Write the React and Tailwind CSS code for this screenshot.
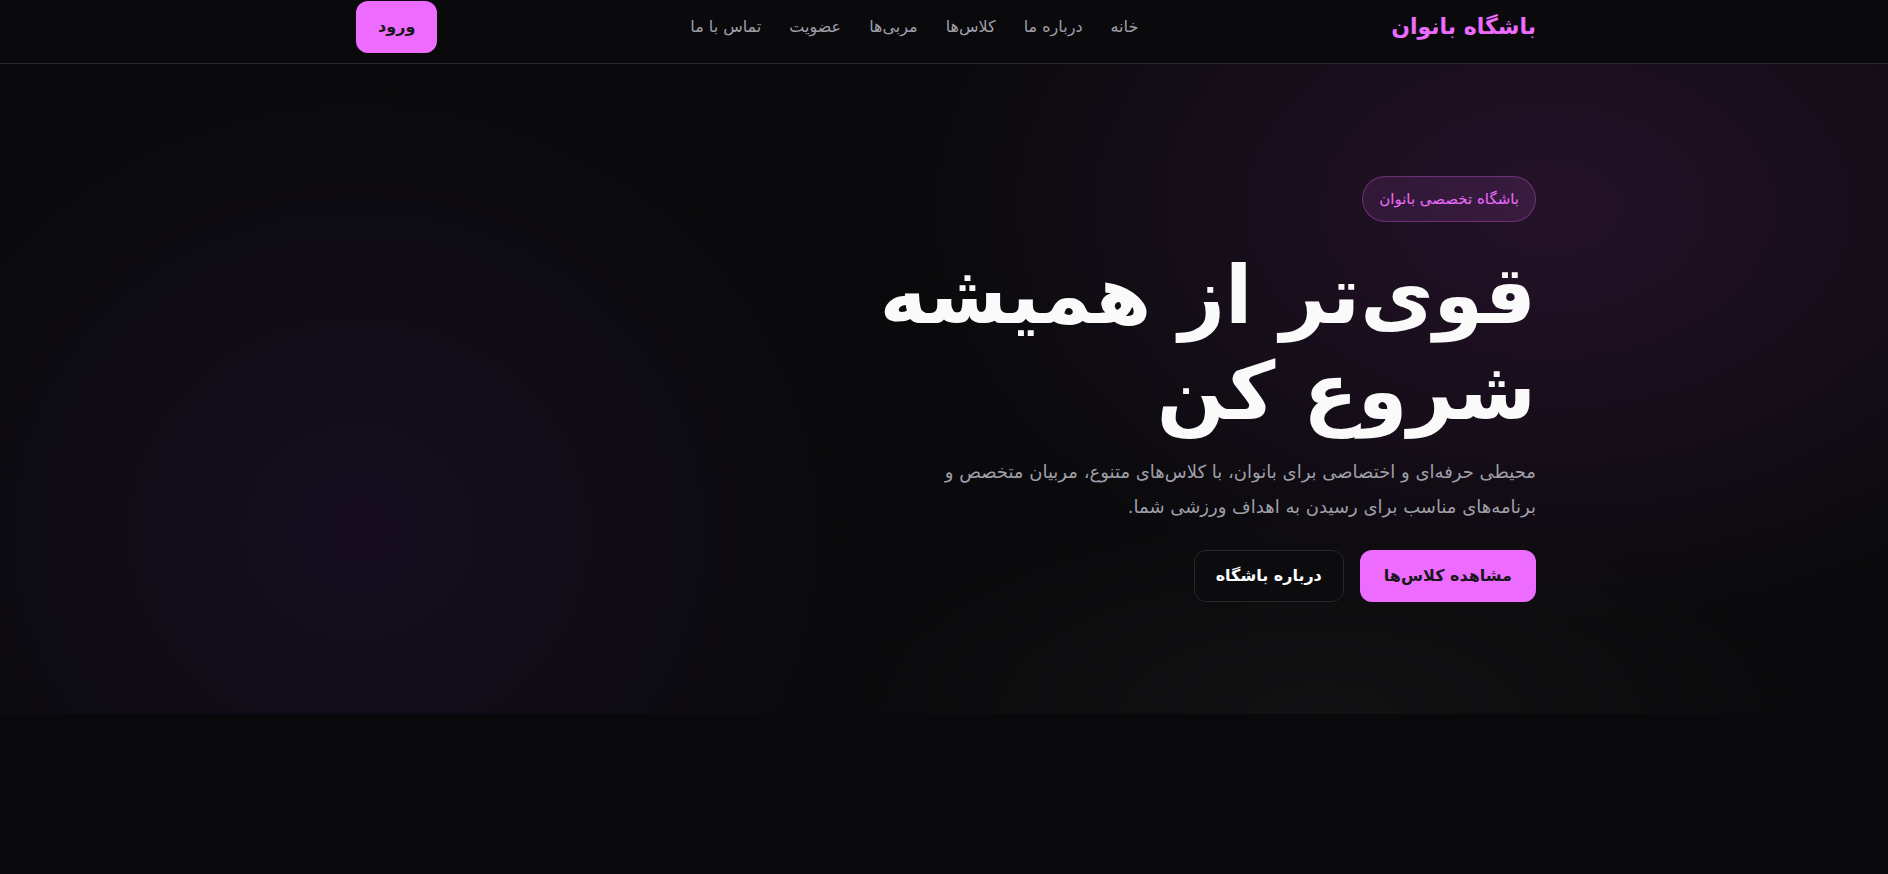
import React from "react";

const links = ["خانه", "درباره ما", "کلاس‌ها", "مربی‌ها", "عضویت", "تماس با ما"];

export default function App() {
  return (
    <div
      dir="rtl"
      className="min-h-screen bg-[#09090b] text-zinc-100"
      style={{ fontFamily: '"DejaVu Sans", "Noto Sans", sans-serif' }}
    >
      {/* header */}
      <header className="border-b border-zinc-800 bg-[#0a0a0c] pb-[10px]">
        <div className="mx-auto flex h-[53px] max-w-7xl items-center justify-between pl-[52px] pr-12">
          <a className="text-[22px] font-bold text-fuchsia-400">باشگاه بانوان</a>
          <nav className="flex items-center gap-7 text-base text-zinc-400">
            {links.map((l) => (
              <a key={l} className="hover:text-white">
                {l}
              </a>
            ))}
          </nav>
          <button className="rounded-xl bg-fuchsia-400 px-[22px] py-3.5 text-base font-bold leading-6 text-zinc-900">
            ورود
          </button>
        </div>
      </header>

      {/* hero */}
      <section className="bg-[#0a0a0c] bg-[radial-gradient(ellipse_900px_600px_at_82%_22%,rgba(217,70,239,0.13),transparent_70%),radial-gradient(ellipse_700px_650px_at_19%_72%,rgba(147,51,234,0.09),transparent_70%),radial-gradient(ellipse_700px_300px_at_70%_100%,rgba(255,255,255,0.03),transparent_70%)] py-28">
        <div className="mx-auto flex max-w-7xl flex-col items-start pl-[52px] pr-12">
          <span className="rounded-full border border-fuchsia-400/30 bg-fuchsia-400/10 px-4 py-2.5 text-[15px] leading-6 text-fuchsia-400">
            باشگاه تخصصی بانوان
          </span>
          <h1 className="mt-[26px] text-[80px] font-bold leading-[1.2] text-zinc-50">
            قوی‌تر از همیشه
            <br />
            شروع کن
          </h1>
          <p className="mt-[14px] max-w-[620px] text-lg leading-[35px] text-zinc-400">
            محیطی حرفه‌ای و اختصاصی برای بانوان، با کلاس‌های متنوع، مربیان متخصص و برنامه‌های مناسب برای رسیدن به اهداف ورزشی شما.
          </p>
          <div className="mt-[26px] flex gap-4">
            <button className="rounded-xl bg-fuchsia-400 px-6 py-3.5 text-base font-bold leading-6 text-zinc-900">
              مشاهده کلاس‌ها
            </button>
            <button className="rounded-xl border border-zinc-800 bg-[#0c0b0e] px-[21px] py-[13px] text-base font-bold leading-6 text-white">
              درباره باشگاه
            </button>
          </div>
        </div>
      </section>
    </div>
  );
}
